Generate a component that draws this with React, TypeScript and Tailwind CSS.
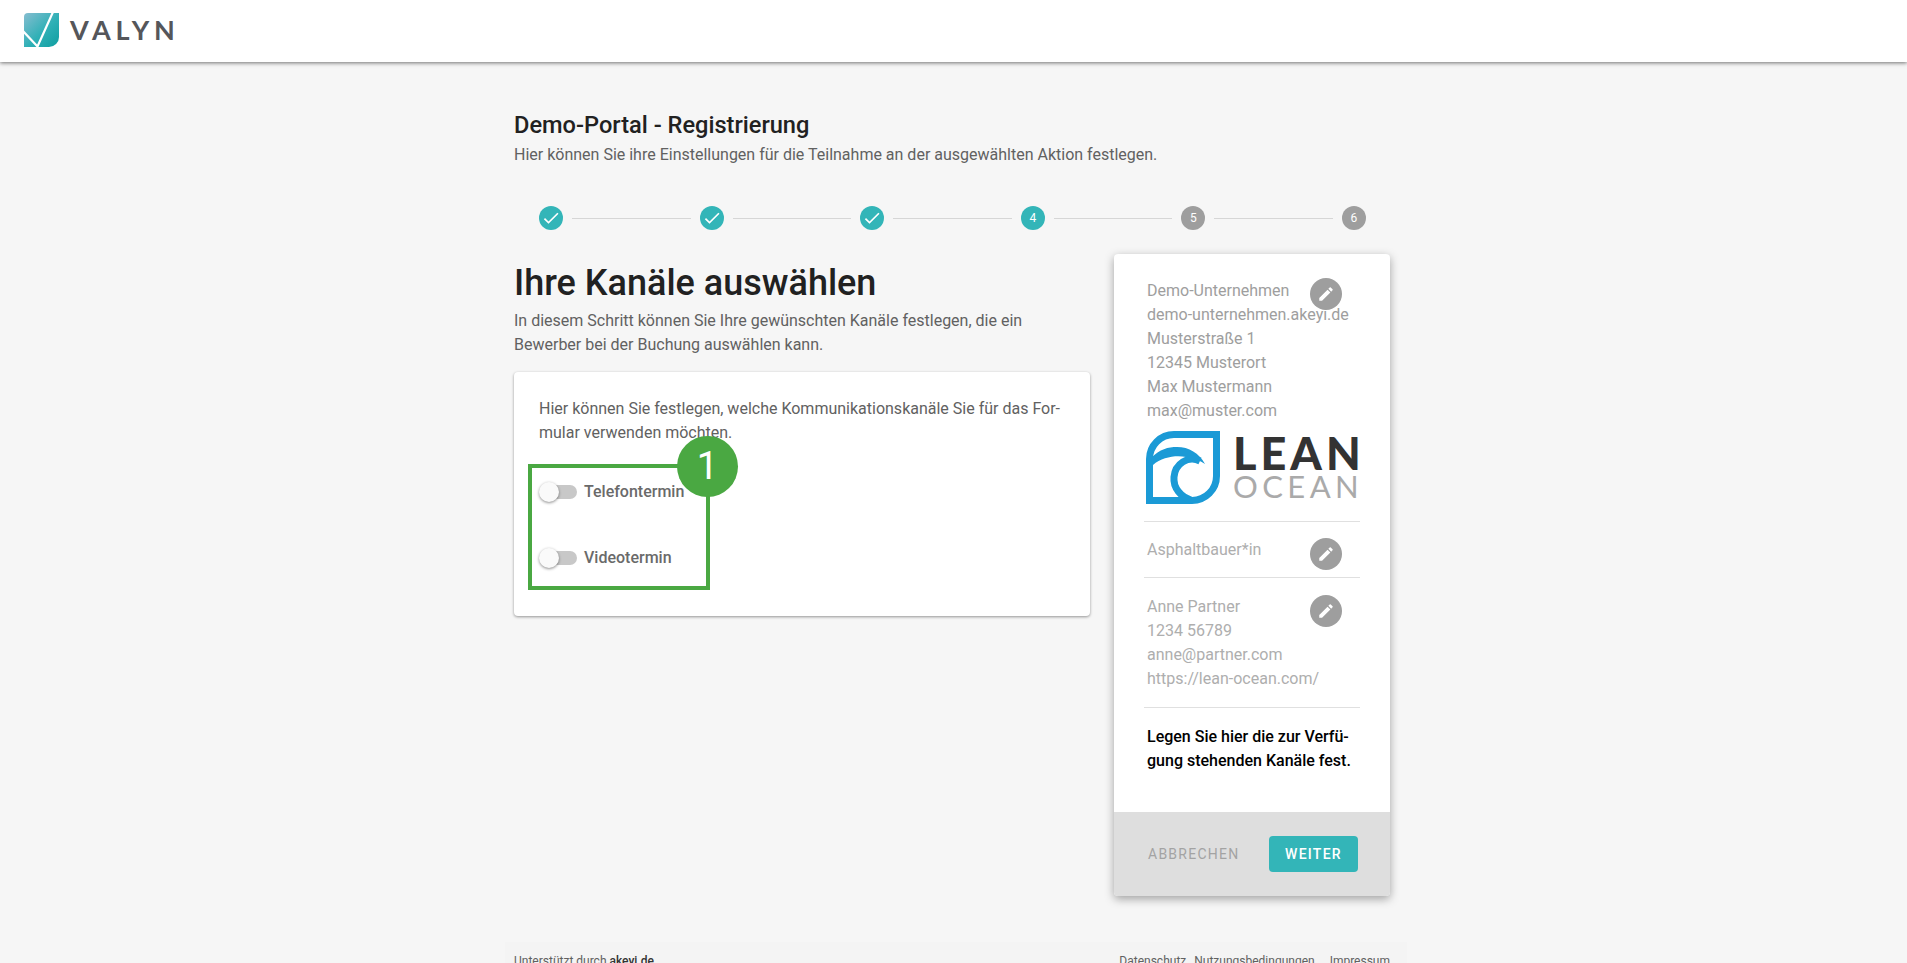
import { MdCheck, MdEdit } from 'react-icons/md';

const steps = [
  { label: '1', done: true, active: true },
  { label: '2', done: true, active: true },
  { label: '3', done: true, active: true },
  { label: '4', done: false, active: true },
  { label: '5', done: false, active: false },
  { label: '6', done: false, active: false },
];

function ValynLogo() {
  return (
    <div className="flex items-center">
      <svg width="35" height="34" viewBox="0 0 35 34">
        <defs>
          <linearGradient id="valyn" x1="0" y1="0" x2="1" y2="1">
            <stop offset="0" stopColor="#86bdd0" />
            <stop offset="0.55" stopColor="#2fb0b6" />
            <stop offset="1" stopColor="#0f9ea0" />
          </linearGradient>
        </defs>
        <path d="M4 0H35V24A10 10 0 0 1 25 34H0V4A4 4 0 0 1 4 0Z" fill="url(#valyn)" />
        <path d="M-1 18L13.5 33.5L29 -1" fill="none" stroke="#fff" strokeWidth="2.2" />
      </svg>
      <span className="ml-[11px] -mt-[2px] font-['Lato',sans-serif] font-bold text-[27px] leading-none tracking-[4.8px] text-[#55565a]">VALYN</span>
    </div>
  );
}

function LeanOceanLogo() {
  return (
    <div className="flex items-center h-[73px] w-[212px]">
      <svg width="74" height="73" viewBox="0 0 74 73" className="shrink-0">
        <path d="M3.5 69.5V28A24.5 24.5 0 0 1 28 3.500H70.5V45A24.5 24.5 0 0 1 46 69.500Z" fill="none" stroke="#1b9ad6" strokeWidth="7" />
        <path d="M5 27C14 18 22 16 31 16C43 16 53 22 59 33C50 27 44 26 40 26C30 24 16 26 7 34Z" fill="#1b9ad6" />
        <path d="M54 30C42 24 29 33 28 46C27 57 35 66 45 69" fill="none" stroke="#1b9ad6" strokeWidth="7" />
      </svg>
      <div className="ml-[13px] flex flex-col font-['Lato',sans-serif]">
        <span className="text-[45px] leading-[36px] font-black tracking-[4px] text-[#333333]">LEAN</span>
        <span className="text-[31px] leading-[30px] font-normal tracking-[4.4px] text-[#aaaaaa]">OCEAN</span>
      </div>
    </div>
  );
}

function EditButton() {
  return (
    <div className="w-8 h-8 shrink-0 rounded-full bg-[#9e9e9e] flex items-center justify-center text-white">
      <MdEdit size={18} />
    </div>
  );
}

function Toggle({ label }: { label: string }) {
  return (
    <div className="flex items-center h-5">
      <div className="relative w-[38px] h-5 shrink-0">
        <div className="absolute left-[2px] right-0 top-[3px] h-[14px] rounded-full bg-[#c8c8c8]" />
        <div className="absolute left-0 top-0 w-5 h-5 rounded-full bg-[#fafafa] shadow-[0_1px_3px_rgba(0,0,0,0.45)]" />
      </div>
      <span className="ml-[7px] text-[16px] font-medium text-[#6a6a6a]">{label}</span>
    </div>
  );
}

export default function App() {
  return (
    <div className="h-screen overflow-hidden bg-[#f6f6f6] font-['Roboto',sans-serif]">
      <header className="h-[62px] bg-white shadow-[0_1px_4px_rgba(0,0,0,0.55)] flex items-center pl-6 pb-[2px]">
        <ValynLogo />
      </header>

      <div className="pr-[3px]">
        <main className="w-[876px] mx-auto">
          <h2 className="mt-[47px] text-[23.6px] leading-8 font-medium text-[#212121]">Demo-Portal - Registrierung</h2>
          <p className="mt-[2px] text-base leading-6 text-[#616161]">
            Hier können Sie ihre Einstellungen für die Teilnahme an der ausgewählten Aktion festlegen.
          </p>

          <div className="mt-[39px] pl-[25px] pr-[24px] flex items-center">
            {steps.map((step, i) => (
              <div key={step.label} className={i < steps.length - 1 ? 'flex items-center flex-1' : 'flex items-center'}>
                <div
                  className={
                    step.active
                      ? 'w-6 h-6 rounded-full bg-[#33b5b8] text-white text-xs flex items-center justify-center shrink-0'
                      : 'w-6 h-6 rounded-full bg-[#9e9e9e] text-white text-xs flex items-center justify-center shrink-0'
                  }
                >
                  {step.done ? <MdCheck size={20} /> : step.label}
                </div>
                {i < steps.length - 1 && <div className="flex-1 h-px bg-[#d6d6d6] mx-[9px]" />}
              </div>
            ))}
          </div>

          <div className="mt-6 flex items-start gap-6">
            <section className="w-[576px] pt-[7px]">
              <h1 className="text-[36px] leading-[44px] font-medium text-[#212121]">Ihre Kanäle auswählen</h1>
              <p className="mt-1 text-base leading-6 text-[#616161]">
                In diesem Schritt können Sie Ihre gewünschten Kanäle festlegen, die ein
                <br />
                Bewerber bei der Buchung auswählen kann.
              </p>

              <div className="relative mt-[15px] h-[244px] bg-white rounded shadow-[0_1px_3px_rgba(0,0,0,0.4)] pt-[25px] px-[25px]">
                <p className="text-base leading-6 text-[#616161]">
                  Hier können Sie festlegen, welche Kommunikationskanäle Sie für das For-
                  <br />
                  mular verwenden möchten.
                </p>
                <div className="mt-[37px] flex flex-col gap-[46px]">
                  <Toggle label="Telefontermin" />
                  <Toggle label="Videotermin" />
                </div>

                <div className="absolute left-[14px] top-[92px] w-[182px] h-[126px] border-4 border-[#4aa842]" />
                <div className="absolute left-[163px] top-[64px] w-[61px] h-[61px] rounded-full bg-[#4aa842] text-white text-[38px] flex items-center justify-center">
                  1
                </div>
              </div>
            </section>

            <aside className="w-[276px] h-[642px] bg-white rounded-sm shadow-[0_3px_10px_rgba(0,0,0,0.35)] flex flex-col overflow-hidden">
              <div className="flex-1 px-[30px] pt-[25px] text-base leading-6 text-[#9e9e9e]">
                <div className="relative pl-[3px]">
                  <div>Demo-Unternehmen</div>
                  <div>demo-unternehmen.akeyi.de</div>
                  <div>Musterstraße 1</div>
                  <div>12345 Musterort</div>
                  <div>Max Mustermann</div>
                  <div>max@muster.com</div>
                  <div className="absolute right-[18px] -top-px">
                    <EditButton />
                  </div>
                </div>
                <div className="mt-2 pl-[2px]">
                  <LeanOceanLogo />
                </div>
                <div className="mt-[17px] h-px bg-[#e0e0e0]" />
                <div className="relative h-[55px] pl-[3px] pt-4 text-[#aeaeae]">
                  <span className="block">Asphaltbauer*in</span>
                  <div className="absolute right-[18px] top-4">
                    <EditButton />
                  </div>
                </div>
                <div className="h-px bg-[#e0e0e0]" />
                <div className="relative pt-[17px] pb-[16px] pl-[3px] text-[#aeaeae]">
                  <div className="whitespace-nowrap">
                    <div>Anne Partner</div>
                    <div>1234 56789</div>
                    <div>anne@partner.com</div>
                    <div>https://lean-ocean.com/</div>
                  </div>
                  <div className="absolute right-[18px] top-[17px]">
                    <EditButton />
                  </div>
                </div>
                <div className="h-px bg-[#e0e0e0]" />
                <p className="mt-[17px] pl-[3px] font-medium text-black text-base whitespace-nowrap">
                  Legen Sie hier die zur Verfü-
                  <br />
                  gung stehenden Kanäle fest.
                </p>
              </div>
              <div className="h-[84px] bg-[#dedede] pl-[34px] pr-[32px] flex items-center justify-between">
                <span className="text-sm font-normal tracking-[1.25px] text-[#a3a3a3]">ABBRECHEN</span>
                <button className="w-[89px] h-9 rounded bg-[#33b5b8] text-white text-sm font-medium tracking-[1.25px]">WEITER</button>
              </div>
            </aside>
          </div>

          <footer className="-ml-[9px] w-[902px] mt-[46px] bg-[#f4f4f4] pl-[9px] pr-[17px] pt-[11px] flex justify-between text-xs leading-4 text-[#616161]">
            <div>
              Unterstützt durch <span className="font-medium text-[#333333]">akeyi.de</span>
            </div>
            <div className="flex">
              <span>Datenschutz</span>
              <span className="ml-2">Nutzungsbedingungen</span>
              <span className="ml-[15px]">Impressum</span>
            </div>
          </footer>
        </main>
      </div>
    </div>
  );
}
